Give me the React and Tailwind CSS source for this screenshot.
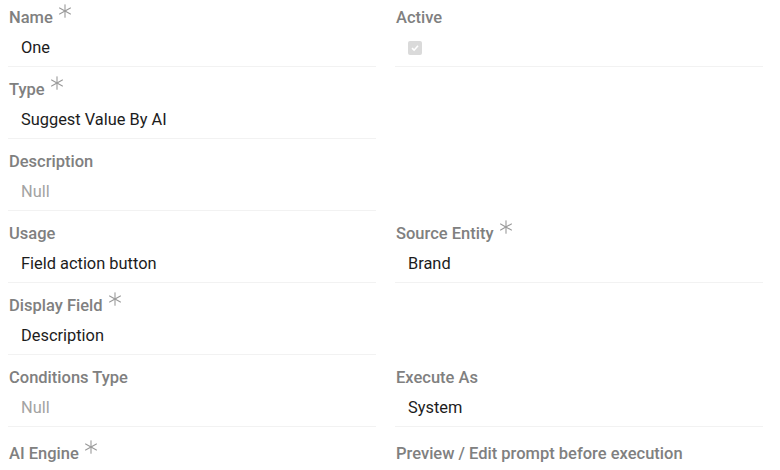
import React from "react";

const Star = () => (
  <svg
    width="14"
    height="14"
    viewBox="0 0 14 14"
    className="ml-[5px] -mt-[15px] shrink-0"
    stroke="#9a9a9a"
    strokeWidth="1.1"
    strokeLinecap="round"
  >
    <line x1="7" y1="0.8" x2="7" y2="13.2" />
    <line x1="1.6" y1="3.9" x2="12.4" y2="10.1" />
    <line x1="1.6" y1="10.1" x2="12.4" y2="3.9" />
  </svg>
);

const Checkbox = () => (
  <span className="inline-flex w-[14px] h-[14px] rounded-[2px] bg-[#dadada] items-center justify-center">
    <svg width="10" height="10" viewBox="0 0 10 10" fill="none" stroke="#fff" strokeWidth="1.6">
      <path d="M2 5.2 L4.1 7.2 L8 2.8" />
    </svg>
  </span>
);

const Field = ({ label, required, value, muted, checkbox, last }) => {
  if (!label) return <div />;
  return (
    <div
      className={
        last
          ? "pt-[17px]"
          : "pt-[13px] pb-[8px] border-b border-[#f2f2f2]"
      }
    >
      <div className="flex items-center h-[20px] pl-[1px] text-[16.5px] leading-[20px] font-medium text-[#808080] whitespace-nowrap">
        {label}
        {required && <Star />}
      </div>
      {!last && (
        <div
          className={
            "mt-[10px] h-[20px] flex items-center pl-[13px] text-[16.4px] leading-[20px] " +
            (muted ? "text-[#a3a3a3]" : "text-[#1c1c1c]")
          }
        >
          {checkbox ? <Checkbox /> : value}
        </div>
      )}
    </div>
  );
};

const rows = [
  [
    { label: "Name", required: true, value: "One" },
    { label: "Active", checkbox: true },
  ],
  [{ label: "Type", required: true, value: "Suggest Value By AI" }, null],
  [{ label: "Description", value: "Null", muted: true }, null],
  [
    { label: "Usage", value: "Field action button" },
    { label: "Source Entity", required: true, value: "Brand" },
  ],
  [{ label: "Display Field", required: true, value: "Description" }, null],
  [
    { label: "Conditions Type", value: "Null", muted: true },
    { label: "Execute As", value: "System" },
  ],
  [
    { label: "AI Engine", required: true, last: true },
    { label: "Preview / Edit prompt before execution", last: true },
  ],
];

export default function App() {
  return (
    <div
      className="w-[780px] h-[470px] overflow-hidden bg-white"
      style={{ fontFamily: "Roboto, 'Liberation Sans', sans-serif" }}
    >
      <div className="-mt-[5px] pl-[8px] w-[763px] grid grid-cols-2 gap-x-[19px]">
        {rows.map((row, i) => (
          <React.Fragment key={i}>
            {row.map((f, j) => (f ? <Field key={j} {...f} /> : <div key={j} />))}
          </React.Fragment>
        ))}
      </div>
    </div>
  );
}
